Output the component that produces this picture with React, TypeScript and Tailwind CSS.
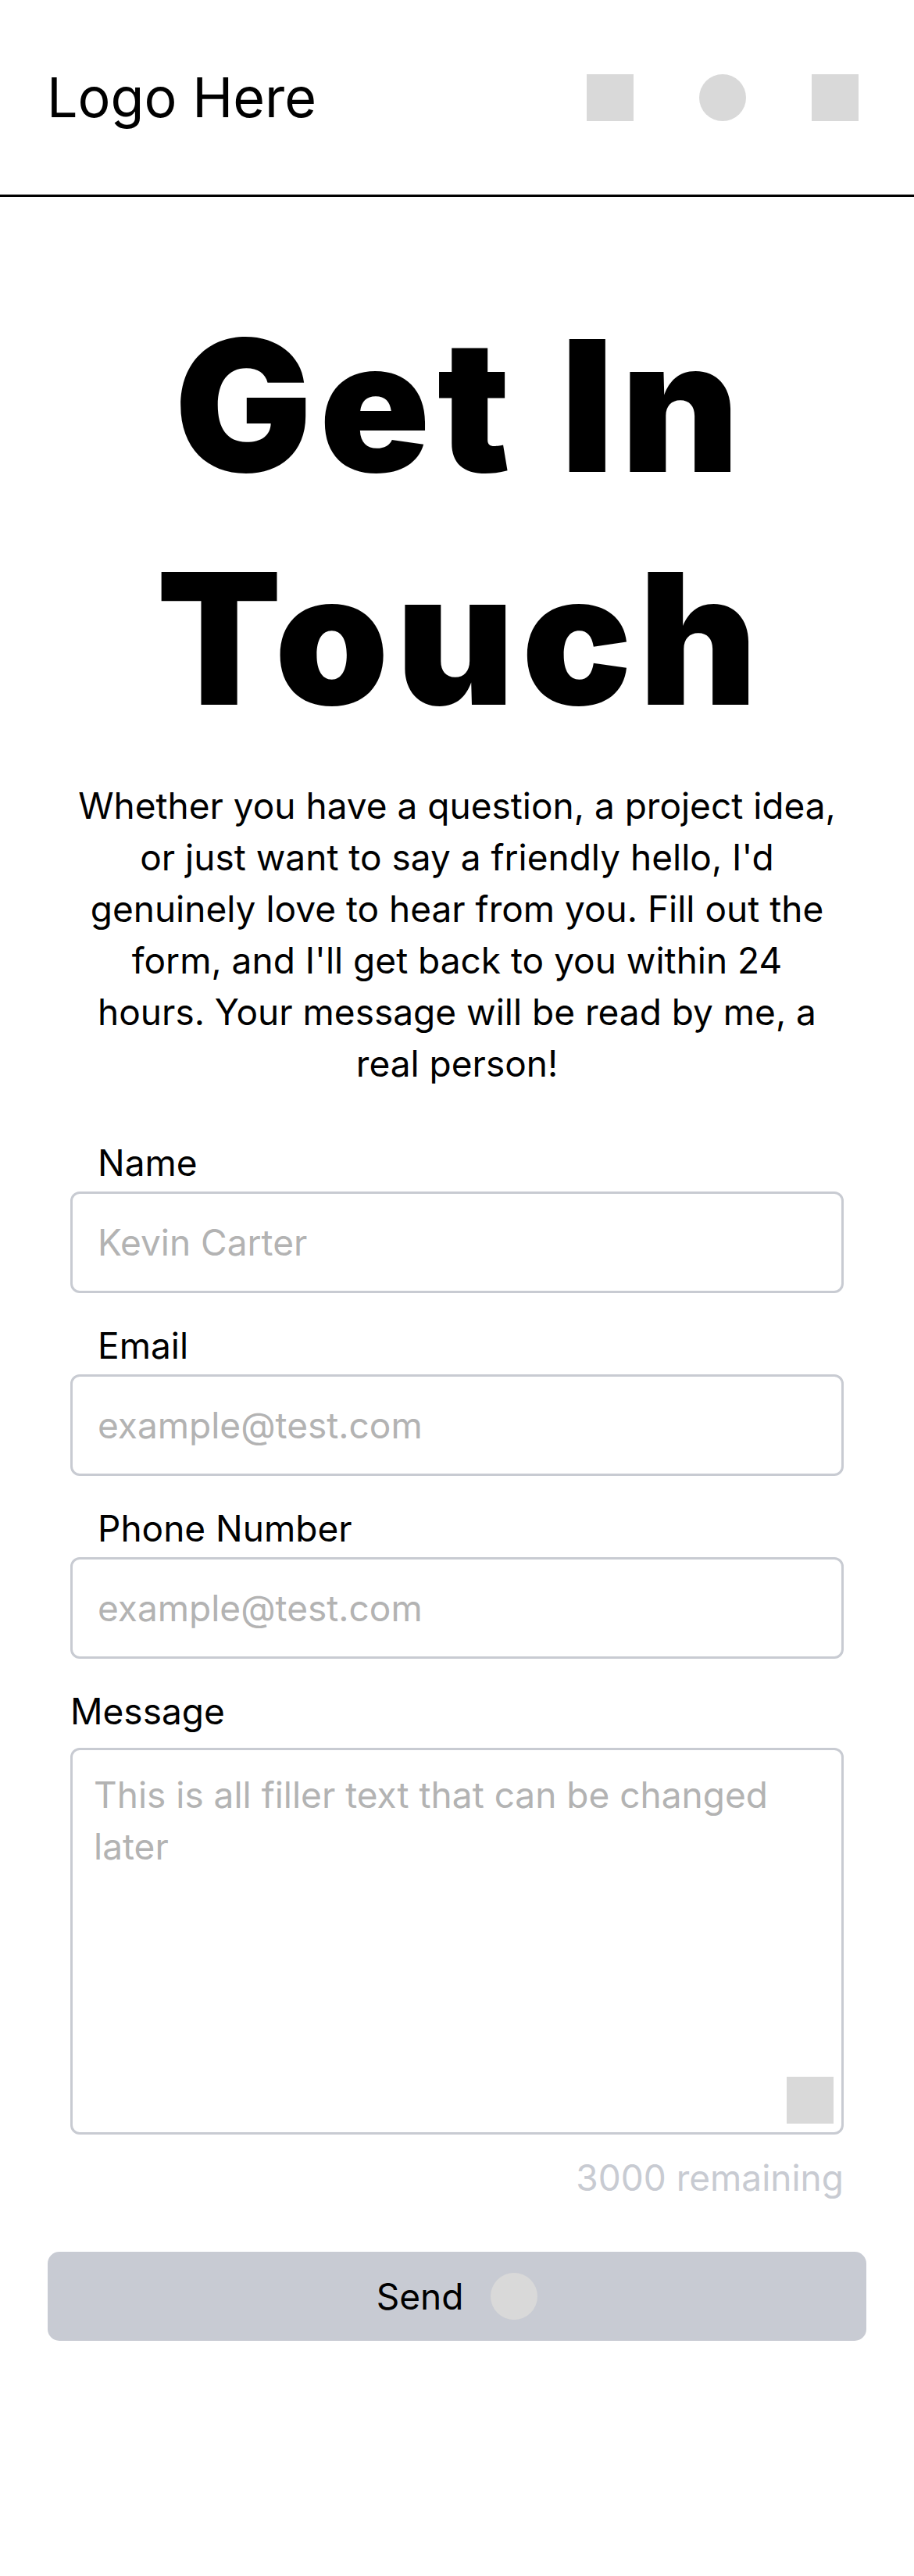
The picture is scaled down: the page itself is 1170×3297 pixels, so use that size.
import React from 'react'

const fields = [
  { label: 'Name', placeholder: 'Kevin Carter', type: 'text' },
  { label: 'Email', placeholder: 'example@test.com', type: 'email' },
  { label: 'Phone Number', placeholder: 'example@test.com', type: 'tel' },
]

export default function App() {
  return (
    <div className="min-h-[3297px] bg-white font-['Inter',sans-serif] text-black">
      {/* Header */}
      <header className="flex h-[252px] items-center justify-between border-b-[3px] border-black pl-[60px] pr-[71px]">
        <span className="text-[70px] leading-none">Logo Here</span>
        <div className="flex items-center gap-[84px]">
          <div className="h-[60px] w-[60px] bg-[#d9d9d9]" />
          <div className="h-[60px] w-[60px] rounded-full bg-[#d9d9d9]" />
          <div className="h-[60px] w-[60px] bg-[#d9d9d9]" />
        </div>
      </header>

      <main className="pt-[118px]">
        <h1 className="pl-[9px] text-center text-[234px] font-black leading-[298px] tracking-[9px]">
          Get In
          <br />
          Touch
        </h1>

        <p className="mx-auto mt-[32px] max-w-[1010px] text-center text-[46px] leading-[66px]">
          Whether you have a question, a project idea,
          <br />
          or just want to say a friendly hello, I'd
          <br />
          genuinely love to hear from you. Fill out the
          <br />
          form, and I'll get back to you within 24
          <br />
          hours. Your message will be read by me, a
          <br />
          real person!
        </p>

        <form className="mt-[67px] px-[90px]" onSubmit={(e) => e.preventDefault()}>
          <div className="flex flex-col gap-[40px]">
            {fields.map((f) => (
              <label key={f.label} className="flex flex-col">
                <span className="pl-[35px] text-[46px] leading-[55px]">{f.label}</span>
                <input
                  type={f.type}
                  placeholder={f.placeholder}
                  className="mt-[9px] h-[130px] w-full rounded-[12px] border-[3px] border-[#c8cbd2] px-[32px] text-[46px] outline-none placeholder:text-[#b3b3b3]"
                />
              </label>
            ))}

            <label className="flex flex-col">
              <span className="text-[46px] leading-[55px]">Message</span>
              <div className="relative mt-[19px]">
                <textarea
                  placeholder="This is all filler text that can be changed later"
                  className="block h-[495px] w-full resize-none rounded-[12px] border-[3px] border-[#c8cbd2] px-[27px] pt-[24px] text-[46px] leading-[66px] outline-none placeholder:text-[#b3b3b3]"
                />
                <div className="absolute bottom-[14px] right-[13px] h-[60px] w-[60px] bg-[#d9d9d9]" />
              </div>
            </label>
          </div>

          <p className="mt-[28px] text-right text-[46px] leading-[55px] text-[#c8cbd2]">3000 remaining</p>
        </form>

        <div className="mt-[67px] px-[61px]">
          <button
            type="button"
            className="flex h-[114px] w-full items-center justify-center gap-[35px] rounded-[15px] bg-[#c8cbd3]"
          >
            <span className="text-[46px] leading-none">Send</span>
            <span className="h-[60px] w-[60px] rounded-full bg-[#d9d9d9]" />
          </button>
        </div>
      </main>
    </div>
  )
}
